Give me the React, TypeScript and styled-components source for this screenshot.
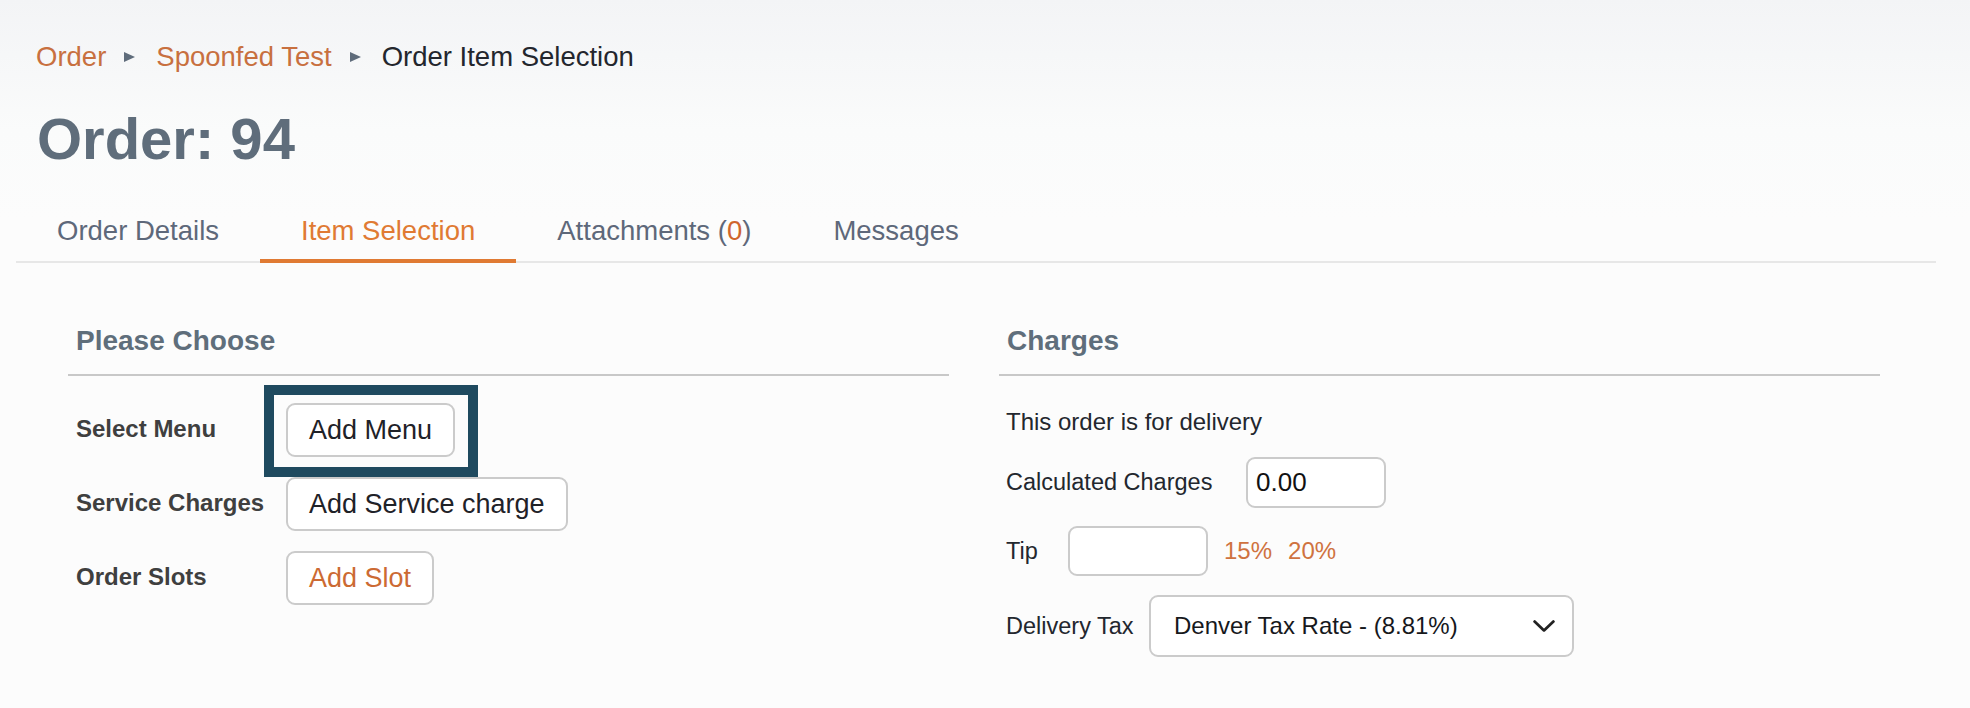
import styled, { createGlobalStyle } from "styled-components";

const GlobalStyle = createGlobalStyle`
  html, body {
    margin: 0;
    padding: 0;
  }
  body {
    min-height: 708px;
    background: linear-gradient(180deg, #f3f4f6 0px, #fafbfb 130px, #fcfcfc 220px);
    background-color: #fcfcfc;
    font-family: "Liberation Sans", Arial, sans-serif;
  }
`;

const Page = styled.div`
  padding: 40px 34px 40px 16px;
`;

const Breadcrumb = styled.nav`
  display: flex;
  align-items: center;
  height: 34px;
  padding-left: 20px;
  font-size: 27.5px;
  line-height: 34px;
`;

const Crumb = styled.span<{ $current?: boolean }>`
  color: ${({ $current }) => ($current ? "#23262d" : "#c8703f")};
`;

const CrumbSep = styled.span`
  width: 0;
  height: 0;
  border-left: 11px solid #5f6c7b;
  border-top: 5px solid transparent;
  border-bottom: 5px solid transparent;
  margin: 0 21px 0 18px;
`;

const Title = styled.h1`
  margin: 32px 0 0;
  padding-left: 21px;
  font-size: 58px;
  line-height: 66px;
  font-weight: 700;
  color: #5f6d7b;
`;

const TabBar = styled.div`
  display: flex;
  margin-top: 42px;
  border-bottom: 2px solid #e7e7e7;
`;

const Tab = styled.div<{ $active?: boolean }>`
  padding: 0 41px 11px;
  margin-bottom: -2px;
  font-size: 27.5px;
  line-height: 34px;
  color: ${({ $active }) => ($active ? "#e07a33" : "#5e687a")};
  border-bottom: 4px solid ${({ $active }) => ($active ? "#e07a33" : "transparent")};
`;

const Count = styled.span`
  color: #d0652c;
`;

const Columns = styled.div`
  display: grid;
  grid-template-columns: 881px 881px;
  column-gap: 50px;
  align-items: start;
  padding-left: 52px;
  margin-top: 61px;
`;

const Panel = styled.section`
  display: flex;
  flex-direction: column;
`;

const SectionTitle = styled.h3`
  margin: 0;
  padding: 0 8px 16px;
  font-size: 28px;
  line-height: 34px;
  font-weight: 700;
  color: #5f6e7b;
  border-bottom: 2px solid #c8c8c8;
`;

const ChooseList = styled.div`
  display: grid;
  grid-template-columns: 218px auto;
  row-gap: 20px;
  justify-items: start;
  margin-top: 27px;
`;

const FieldLabel = styled.div`
  padding: 11px 0 0 8px;
  font-size: 24px;
  line-height: 29px;
  font-weight: 700;
  color: #3f3f3f;
`;

const ActionButton = styled.button<{ $accent?: boolean; $focused?: boolean }>`
  position: relative;
  height: 54px;
  padding: 0 21px;
  border: 2px solid #cbcbcb;
  border-radius: 9px;
  background: #ffffff;
  font-family: inherit;
  font-size: 27px;
  color: ${({ $accent }) => ($accent ? "#cc6a33" : "#1f2228")};
  outline: none;
  cursor: pointer;

  &::after {
    content: "";
    display: ${({ $focused }) => ($focused ? "block" : "none")};
    position: absolute;
    top: -20px;
    bottom: -22px;
    left: -24px;
    right: -25px;
    border: 10px solid #1f4a5f;
    pointer-events: none;
  }
`;

const Note = styled.p`
  margin: 31px 0 0;
  padding-left: 7px;
  font-size: 24px;
  line-height: 29px;
  color: #23272e;
`;

const ChargeRow = styled.div<{ $top: number }>`
  display: flex;
  align-items: center;
  margin-top: ${({ $top }) => $top}px;
  padding-left: 7px;
`;

const ChargeLabel = styled.label<{ $width: number }>`
  width: ${({ $width }) => $width}px;
  flex-shrink: 0;
  font-size: 23.5px;
  color: #23272e;
`;

const TextInput = styled.input<{ $height: number }>`
  box-sizing: border-box;
  width: 140px;
  height: ${({ $height }) => $height}px;
  padding: 0 8px;
  border: 2px solid #cbcbcb;
  border-radius: 9px;
  background: #ffffff;
  font-family: inherit;
  font-size: 26px;
  color: #111111;
  outline: none;
`;

const PercentLink = styled.span`
  margin-left: 16px;
  font-size: 24px;
  color: #cf7240;
`;

const SelectBox = styled.div`
  box-sizing: border-box;
  display: flex;
  align-items: center;
  justify-content: space-between;
  width: 425px;
  height: 62px;
  padding: 0 17px 0 23px;
  border: 2px solid #cbcbcb;
  border-radius: 9px;
  background: #ffffff;
  font-size: 24px;
  color: #16181c;
`;

const Chevron = () => (
  <svg width="22" height="12" viewBox="0 0 22 12" fill="none">
    <path d="M1.6 1.6 L11 10.4 L20.4 1.6" stroke="#222" strokeWidth="2.8" strokeLinecap="round" strokeLinejoin="round" />
  </svg>
);

export default function App() {
  return (
    <>
      <GlobalStyle />
      <Page>
        <Breadcrumb>
          <Crumb>Order</Crumb>
          <CrumbSep />
          <Crumb>Spoonfed Test</Crumb>
          <CrumbSep />
          <Crumb $current>Order Item Selection</Crumb>
        </Breadcrumb>

        <Title>Order: 94</Title>

        <TabBar>
          <Tab>Order Details</Tab>
          <Tab $active>Item Selection</Tab>
          <Tab>
            Attachments (<Count>0</Count>)
          </Tab>
          <Tab>Messages</Tab>
        </TabBar>

        <Columns>
          <Panel>
            <SectionTitle>Please Choose</SectionTitle>
            <ChooseList>
              <FieldLabel>Select Menu</FieldLabel>
              <ActionButton $focused>Add Menu</ActionButton>
              <FieldLabel>Service Charges</FieldLabel>
              <ActionButton>Add Service charge</ActionButton>
              <FieldLabel>Order Slots</FieldLabel>
              <ActionButton $accent>Add Slot</ActionButton>
            </ChooseList>
          </Panel>

          <Panel>
            <SectionTitle>Charges</SectionTitle>
            <Note>This order is for delivery</Note>
            <ChargeRow $top={21}>
              <ChargeLabel $width={240}>Calculated Charges</ChargeLabel>
              <TextInput $height={51} defaultValue="0.00" />
            </ChargeRow>
            <ChargeRow $top={18}>
              <ChargeLabel $width={62}>Tip</ChargeLabel>
              <TextInput $height={50} defaultValue="" />
              <PercentLink>15%</PercentLink>
              <PercentLink>20%</PercentLink>
            </ChargeRow>
            <ChargeRow $top={19}>
              <ChargeLabel $width={143}>Delivery Tax</ChargeLabel>
              <SelectBox>
                Denver Tax Rate - (8.81%)
                <Chevron />
              </SelectBox>
            </ChargeRow>
          </Panel>
        </Columns>
      </Page>
    </>
  );
}
